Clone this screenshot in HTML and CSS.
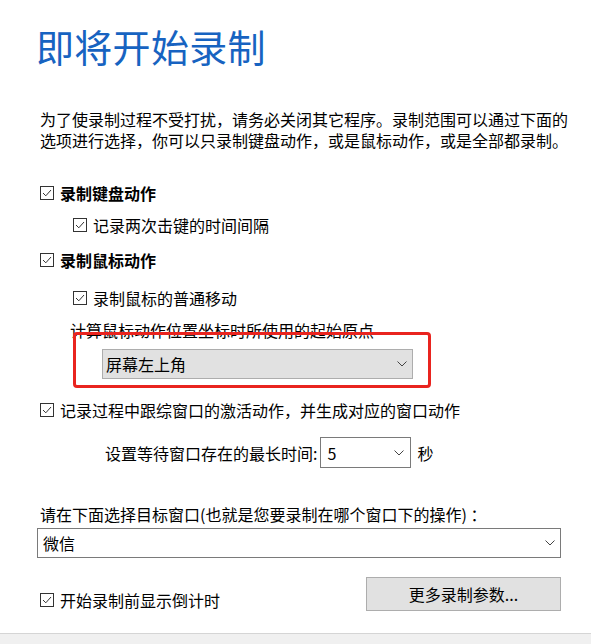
FILE: index.html
```html
<!DOCTYPE html>
<html lang="zh-CN">
<head>
<meta charset="utf-8">
<title>即将开始录制</title>
<link rel="stylesheet" href="styles.css">
</head>
<body>
<div class="window">
  <main class="content">
    <h1 class="title">即将开始录制</h1>
    <div class="intro">
      <div class="intro-line">为了使录制过程不受打扰，请务必关闭其它程序。录制范围可以通过下面的</div>
      <div class="intro-line">选项进行选择，你可以只录制键盘动作，或是鼠标动作，或是全部都录制。</div>
    </div>

    <div class="check check-main row-kb">
      <span class="box"><svg viewBox="0 0 14 14" width="14" height="14"><rect x="0.5" y="0.5" width="13" height="13" fill="#fff" stroke="#333"/><path d="M3 7 L5.8 9.8 L11 4" fill="none" stroke="#333" stroke-width="1"/></svg></span>
      <span class="label bold">录制键盘动作</span>
    </div>
    <div class="check check-sub row-interval">
      <span class="box"><svg viewBox="0 0 14 14" width="14" height="14"><rect x="0.5" y="0.5" width="13" height="13" fill="#fff" stroke="#333"/><path d="M3 7 L5.8 9.8 L11 4" fill="none" stroke="#333" stroke-width="1"/></svg></span>
      <span class="label">记录两次击键的时间间隔</span>
    </div>
    <div class="check check-main row-mouse">
      <span class="box"><svg viewBox="0 0 14 14" width="14" height="14"><rect x="0.5" y="0.5" width="13" height="13" fill="#fff" stroke="#333"/><path d="M3 7 L5.8 9.8 L11 4" fill="none" stroke="#333" stroke-width="1"/></svg></span>
      <span class="label bold">录制鼠标动作</span>
    </div>
    <div class="check check-sub row-move">
      <span class="box"><svg viewBox="0 0 14 14" width="14" height="14"><rect x="0.5" y="0.5" width="13" height="13" fill="#fff" stroke="#333"/><path d="M3 7 L5.8 9.8 L11 4" fill="none" stroke="#333" stroke-width="1"/></svg></span>
      <span class="label">录制鼠标的普通移动</span>
    </div>

    <div class="origin">
      <div class="origin-label">计算鼠标动作位置坐标时所使用的起始原点</div>
      <div class="select select-gray origin-select">
        <span class="select-text">屏幕左上角</span>
        <svg class="chev" viewBox="0 0 10 6" width="10" height="6"><path d="M0.5 0.5 L5 5 L9.5 0.5" fill="none" stroke="#444" stroke-width="1"/></svg>
      </div>
      <div class="highlight"></div>
    </div>

    <div class="check check-main row-track">
      <span class="box"><svg viewBox="0 0 14 14" width="14" height="14"><rect x="0.5" y="0.5" width="13" height="13" fill="#fff" stroke="#333"/><path d="M3 7 L5.8 9.8 L11 4" fill="none" stroke="#333" stroke-width="1"/></svg></span>
      <span class="label">记录过程中跟综窗口的激活动作，并生成对应的窗口动作</span>
    </div>

    <div class="wait-row">
      <span class="wait-label">设置等待窗口存在的最长时间:</span>
      <div class="select select-white wait-select">
        <span class="select-text">5</span>
        <svg class="chev" viewBox="0 0 10 6" width="10" height="6"><path d="M0.5 0.5 L5 5 L9.5 0.5" fill="none" stroke="#444" stroke-width="1"/></svg>
      </div>
      <span class="unit">秒</span>
    </div>

    <div class="target-label">请在下面选择目标窗口(也就是您要录制在哪个窗口下的操作) ：</div>
    <div class="select select-white target-select">
      <span class="select-text">微信</span>
      <svg class="chev" viewBox="0 0 10 6" width="10" height="6"><path d="M0.5 0.5 L5 5 L9.5 0.5" fill="none" stroke="#444" stroke-width="1"/></svg>
    </div>

    <div class="bottom-row">
      <div class="check check-main row-countdown">
        <span class="box"><svg viewBox="0 0 14 14" width="14" height="14"><rect x="0.5" y="0.5" width="13" height="13" fill="#fff" stroke="#333"/><path d="M3 7 L5.8 9.8 L11 4" fill="none" stroke="#333" stroke-width="1"/></svg></span>
        <span class="label">开始录制前显示倒计时</span>
      </div>
      <button class="btn" type="button">更多录制参数...</button>
    </div>
  </main>
  <footer class="statusbar"></footer>
</div>
</body>
</html>
```
FILE: styles.css
```css
html, body {
  margin: 0;
  padding: 0;
  background: #fff;
  overflow: hidden;
}

body {
  font-family: "Noto Sans CJK SC", "Microsoft YaHei", sans-serif;
  font-size: 16px;
  color: #000;
}

.window {
  display: flex;
  flex-direction: column;
  height: 644px;
}

.content {
  flex: 1;
  padding: 21px 30px 0 40px;
  display: flex;
  flex-direction: column;
  align-items: flex-start;
}

.title {
  margin: 0 0 0 -4px;
  font-size: 38px;
  line-height: 50px;
  font-weight: 400;
  color: #1763c1;
  letter-spacing: 0.3px;
}

.intro {
  margin-top: 38px;
  display: flex;
  flex-direction: column;
}

.intro-line {
  height: 21px;
  line-height: 21px;
  white-space: nowrap;
}

.check {
  display: flex;
  align-items: center;
  height: 20px;
  line-height: 20px;
  white-space: nowrap;
}

.box {
  display: flex;
  width: 14px;
  height: 14px;
}

.check-main {
  gap: 6px;
}

.check-sub {
  margin-left: 33px;
  gap: 6px;
}

.bold {
  font-weight: 700;
}

.row-kb { margin-top: 32px; }
.row-interval { margin-top: 12px; }
.row-mouse { margin-top: 15px; }
.row-move { margin-top: 18px; }

.origin {
  position: relative;
  margin-top: 12px;
  display: flex;
  flex-direction: column;
  align-items: flex-start;
}

.origin-label {
  margin-left: 30px;
  line-height: 20px;
  height: 20px;
  white-space: nowrap;
}

.select {
  display: flex;
  align-items: center;
  justify-content: space-between;
  box-sizing: border-box;
  white-space: nowrap;
}

.select-gray {
  background: #e1e1e1;
  border: 1px solid #adadad;
}

.select-white {
  background: #fff;
  border: 1px solid #7a7a7a;
}

.select-text {
  line-height: 20px;
}

.chev {
  display: block;
}

.origin-select {
  margin-top: 9px;
  margin-left: 62px;
  width: 311px;
  height: 30px;
  padding: 0 5px 0 3px;
}

.highlight {
  position: absolute;
  left: 33px;
  top: 12px;
  width: 358px;
  height: 56px;
  box-sizing: border-box;
  border: 3.5px solid #e9241f;
  border-radius: 4px;
}

.row-track { margin-top: 21px; }

.wait-row {
  margin-top: 17px;
  margin-left: 65px;
  display: flex;
  align-items: center;
  white-space: nowrap;
}

.wait-label {
  line-height: 20px;
}

.wait-select {
  margin-left: 3px;
  width: 91px;
  height: 31px;
  padding: 0 6px 0 6px;
}

.unit {
  margin-left: 6px;
  line-height: 20px;
}

.target-label {
  margin-top: 36px;
  line-height: 20px;
  white-space: nowrap;
}

.target-select {
  margin-top: 4px;
  margin-left: -3px;
  width: 524px;
  height: 30px;
  padding: 0 5px 0 5px;
}

.bottom-row {
  margin-top: 19px;
  width: 521px;
  display: flex;
  justify-content: space-between;
  align-items: flex-start;
}

.row-countdown {
  margin-top: 13px;
}

.btn {
  width: 195px;
  height: 34px;
  margin: 0;
  padding: 0;
  background: #e1e1e1;
  border: 1px solid #adadad;
  font-family: inherit;
  font-size: 16px;
  color: #000;
  line-height: 20px;
}

.statusbar {
  height: 10px;
  border-top: 1px solid #d5d5d5;
  background: #f0f0f0;
}
```
